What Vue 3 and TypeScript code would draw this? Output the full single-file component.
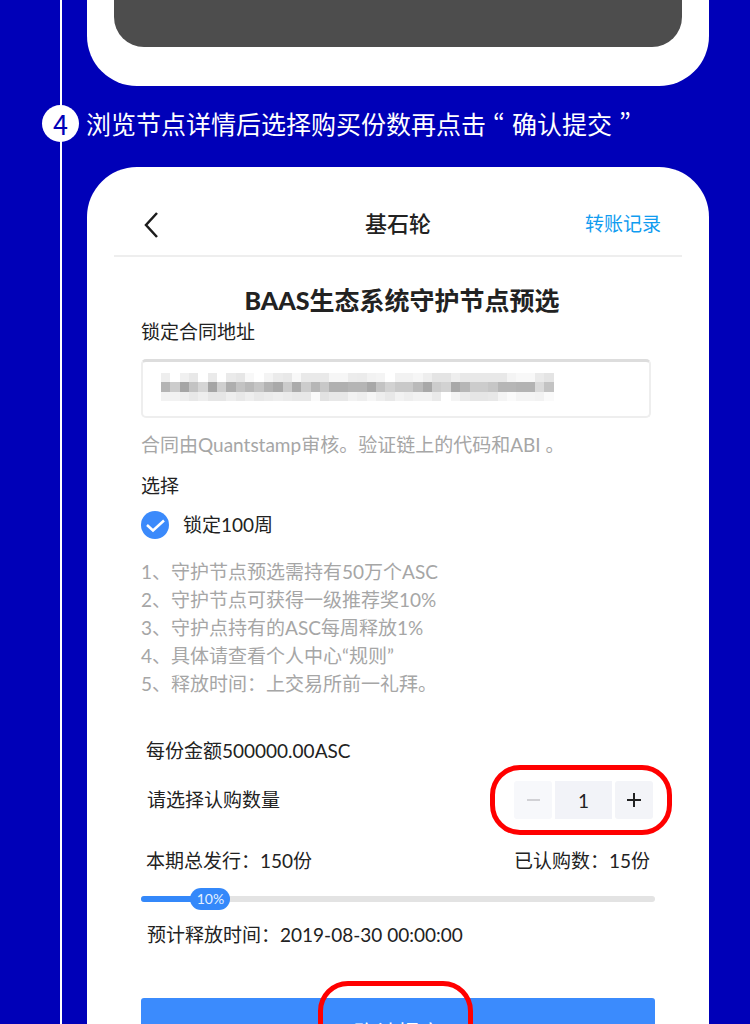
<script setup lang="ts">
import { computed, ref } from 'vue'

const quantity = ref(1)
const locked = ref(true)
const percent = ref(10)
const barWidth = computed(() => ({ width: `${percent.value}%` }))
const badgeLeft = computed(() => ({ left: `${percent.value}%` }))

const rules: string[] = [
  '1、守护节点预选需持有50万个ASC',
  '2、守护节点可获得一级推荐奖10%',
  '3、守护点持有的ASC每周释放1%',
  '4、具体请查看个人中心“规则”',
  '5、释放时间：上交易所前一礼拜。',
]

// Grey levels of the blocks that hide the contract address, one string per row.
const mosaic: string[][] = [
  'ee ff f0 e8 ff ea ff ea e6 f8 ff f4 eb e8 f8 e9 e9 e9 f6 f6 ec eb f2 f4 ff f2 f2 f6 ee e4 e4 ee e8 e8 e8 e8 e8 f4 f8 f8 ea e4',
  'b4 cc a5 c3 d5 a5 cf ae c3 b9 c5 b3 a9 cb ab cc b6 c8 b0 b0 b5 b5 a8 c3 d2 c9 c9 ba a8 cc d2 a8 b6 cc cc c6 b6 b6 b3 b3 da c3',
  'f2 f2 ee e8 ee e6 e6 ee e8 ee e8 eb ee eb e8 e8 fa e2 e8 e8 f2 ee f6 ee e8 f2 ee f2 f2 ea ff f4 ea e6 e6 e8 f4 fa f4 f4 f2 fa',
].map((row) => row.split(' '))

function change(step: number): void {
  quantity.value = Math.max(1, quantity.value + step)
}
</script>

<template>
  <main class="page" lang="zh-CN">
    <div class="timeline">
      <section class="card card-previous">
        <div class="dim"></div>
      </section>

      <h2 class="step">
        <span class="step-number">4</span>
        <span class="step-text">浏览节点详情后选择购买份数再点击<span class="quote" lang="ko"> “ </span>确认提交<span class="quote" lang="ko"> ”</span></span>
      </h2>

      <section class="card">
        <header class="bar">
          <button class="back" type="button" aria-label="返回">
            <svg width="18" height="28" viewBox="0 0 18 28" fill="none">
              <path d="M16 3 5 15 16 27" stroke="#1c1c1c" stroke-width="2.500" />
            </svg>
          </button>
          <h1 class="bar-title">基石轮</h1>
          <a class="records" href="#records">转账记录</a>
        </header>

        <form class="body" @submit.prevent>
          <h2 class="title"><span class="brand">BAAS</span>生态系统守护节点预选</h2>

          <label class="label" for="contract">锁定合同地址</label>
          <div class="field">
            <input id="contract" class="field-input" type="text" readonly />
            <svg class="mosaic" viewBox="0 0 42 3" preserveAspectRatio="none" shape-rendering="crispEdges">
              <g v-for="(row, y) in mosaic" :key="y">
                <rect v-for="(g, x) in row" :key="x" :x="x" :y="y" width="1" height="1" :fill="`#${g}${g}${g}`" />
              </g>
            </svg>
          </div>
          <p class="hint">合同由Quantstamp审核。验证链上的代码和ABI 。</p>

          <p class="choose">选择</p>
          <label class="lock">
            <span class="check">
              <input v-model="locked" class="check-input" type="checkbox" />
              <svg v-if="locked" class="check-mark" viewBox="0 0 28 28" fill="none">
                <path d="M6 14 12 19.500 23 9.500" stroke="#fff" stroke-width="2.500" />
              </svg>
            </span>
            锁定100周
          </label>

          <ul class="rules">
            <li v-for="rule in rules" :key="rule">{{ rule }}</li>
          </ul>

          <p class="amount">每份金额500000.00ASC</p>

          <div class="row quantity">
            <label for="quantity">请选择认购数量</label>
            <div class="stepper">
              <button class="stepper-button" type="button" aria-label="减少" :disabled="quantity <= 1" @click="change(-1)">
                <svg width="14" height="14" viewBox="0 0 14 14"><path d="M1 7h13" stroke="currentColor" stroke-width="1.500" /></svg>
              </button>
              <input id="quantity" v-model.number="quantity" class="stepper-value" type="text" inputmode="numeric" />
              <button class="stepper-button" type="button" aria-label="增加" @click="change(1)">
                <svg width="14" height="14" viewBox="0 0 14 14"><path d="M0 7h14M7 0v14" stroke="currentColor" stroke-width="2" /></svg>
              </button>
            </div>
          </div>

          <div class="row totals">
            <span>本期总发行：150份</span>
            <span>已认购数：15份</span>
          </div>

          <div class="progress" role="progressbar" aria-valuemin="0" aria-valuemax="100" :aria-valuenow="percent">
            <div class="track"><div class="fill" :style="barWidth"></div></div>
            <span class="badge" :style="badgeLeft">{{ percent }}%</span>
          </div>

          <p class="release">预计释放时间：2019-08-30 00:00:00</p>

          <div class="submit-area">
            <button class="submit" type="submit">确认提交</button>
          </div>
        </form>
      </section>
    </div>
  </main>
</template>

<style>
body {
  margin: 0;
  background: #0000b8;
}
</style>

<style scoped>
.page {
  height: 100vh;
  overflow-x: hidden;
  overflow-y: auto;
  scrollbar-width: none;
  background: #0000b8;
  color: #222;
  font-family: Lato, "Noto Sans CJK SC", sans-serif;
  font-size: 19px;
  line-height: 28px;
}

.page *,
.page *::after {
  box-sizing: border-box;
}

h1,
h2,
p,
ul {
  margin: 0;
  padding: 0;
}

button,
input {
  margin: 0;
  padding: 0;
  border: 0;
  font: inherit;
  color: inherit;
}

.timeline {
  position: relative;
  padding: 0 41px 40px 42px;
}

.timeline::before {
  content: "";
  position: absolute;
  top: 0;
  bottom: 0;
  left: 60px;
  width: 2px;
  background: #fff;
}

.card {
  margin-left: 45px;
  padding: 0 27px 50px;
  border-radius: 50px;
  background: #fff;
}

.card-previous {
  padding-bottom: 39px;
  border-radius: 0 0 50px 50px;
}

.dim {
  height: 47px;
  border-radius: 0 0 30px 30px;
  background: #4d4d4d;
}

.step {
  position: relative;
  display: flex;
  align-items: center;
  gap: 7px;
  margin: 19px 0 25px;
  color: #fff;
  font-family: "Noto Sans CJK SC", sans-serif;
  font-size: 25px;
  font-weight: 400;
  line-height: 37px;
}

.step-number {
  flex: none;
  width: 37px;
  height: 37px;
  border-radius: 50%;
  background: #fff;
  color: #0000b8;
  font-size: 27px;
  text-align: center;
}

.step-text {
  white-space: nowrap;
}

.quote {
  font-family: "Noto Sans CJK KR", sans-serif;
}

.bar {
  display: grid;
  grid-template-columns: 1fr auto 1fr;
  align-items: center;
  padding: 25px 21px 0;
  border-bottom: 2px solid #eee;
  line-height: 63px;
}

.back {
  display: flex;
  justify-self: start;
  padding-left: 6px;
  background: none;
}

.bar-title {
  font-size: 22px;
  font-weight: 500;
}

.records {
  justify-self: end;
  color: #109cf0;
  text-decoration: none;
}

.body {
  padding: 25px 27px 0;
}

.title {
  padding-left: 8px;
  font-size: 25px;
  font-weight: 700;
  line-height: 36px;
  text-align: center;
}

.brand {
  font-weight: 900;
}

.label {
  display: block;
}

.field {
  position: relative;
  height: 59px;
  margin: 13px 4px 13px 0;
}

.field-input {
  width: 100%;
  height: 100%;
  border: 2px solid #eee;
  border-top: 3px solid #ddd;
  border-radius: 5px;
  background: #fff;
}

.mosaic {
  position: absolute;
  top: 14px;
  left: 20px;
  width: 77%;
  height: 28px;
}

.hint {
  color: #a6a6a6;
}

.choose {
  margin: 13px 0 11px;
}

.lock {
  display: flex;
  align-items: center;
  gap: 14px;
}

.check {
  position: relative;
  width: 28px;
  height: 28px;
}

.check-input {
  display: block;
  width: 28px;
  height: 28px;
  appearance: none;
  border-radius: 50%;
  background: #ddd;
}

.check-input:checked {
  background: #3b8afb;
}

.check-mark {
  position: absolute;
  inset: 0;
  pointer-events: none;
}

.rules {
  margin-top: 19px;
  color: #a6a6a6;
  list-style: none;
}

.amount {
  margin-top: 39px;
  padding-left: 5px;
}

.row {
  display: flex;
  align-items: center;
  justify-content: space-between;
}

.quantity {
  margin: 16px 2px 28px 6px;
}

.stepper {
  position: relative;
  display: flex;
  gap: 3px;
}

.stepper::after {
  content: "";
  position: absolute;
  inset: -16px -19px -16px -24px;
  border: 5px solid #f00;
  border-radius: 30px;
  pointer-events: none;
}

.stepper-button {
  display: flex;
  align-items: center;
  justify-content: center;
  width: 38px;
  height: 38px;
  border-radius: 3px;
  background: #f3f4f8;
}

.stepper-button:disabled {
  background: #f7f8fb;
  color: #c4c4c8;
}

.stepper-value {
  width: 57px;
  height: 38px;
  background: #f2f3f8;
  text-align: center;
}

.totals {
  padding: 0 5px;
}

.progress {
  position: relative;
  display: flex;
  align-items: center;
  height: 22px;
  margin: 13px 0 11px;
}

.track {
  flex: 1;
  height: 6px;
  border-radius: 3px;
  background: #e3e3e3;
  overflow: hidden;
}

.fill {
  height: 100%;
  background: #3488fa;
}

.badge {
  position: absolute;
  top: 0;
  width: 40px;
  margin-left: -2px;
  border-radius: 11px;
  background: #3488fa;
  color: #e4f0ff;
  font-size: 14px;
  line-height: 22px;
  text-align: center;
}

.release {
  padding-left: 6px;
}

.submit-area {
  position: relative;
  margin-top: 49px;
}

.submit-area::after {
  content: "";
  position: absolute;
  top: -17px;
  bottom: -17px;
  left: calc(50% - 80px);
  width: 155px;
  border: 5px solid #f00;
  border-radius: 30px;
  pointer-events: none;
}

.submit {
  display: block;
  width: 100%;
  height: 70px;
  border-radius: 3px;
  background: #3b8bfd;
  color: #fff;
  font-size: 22px;
}
</style>
